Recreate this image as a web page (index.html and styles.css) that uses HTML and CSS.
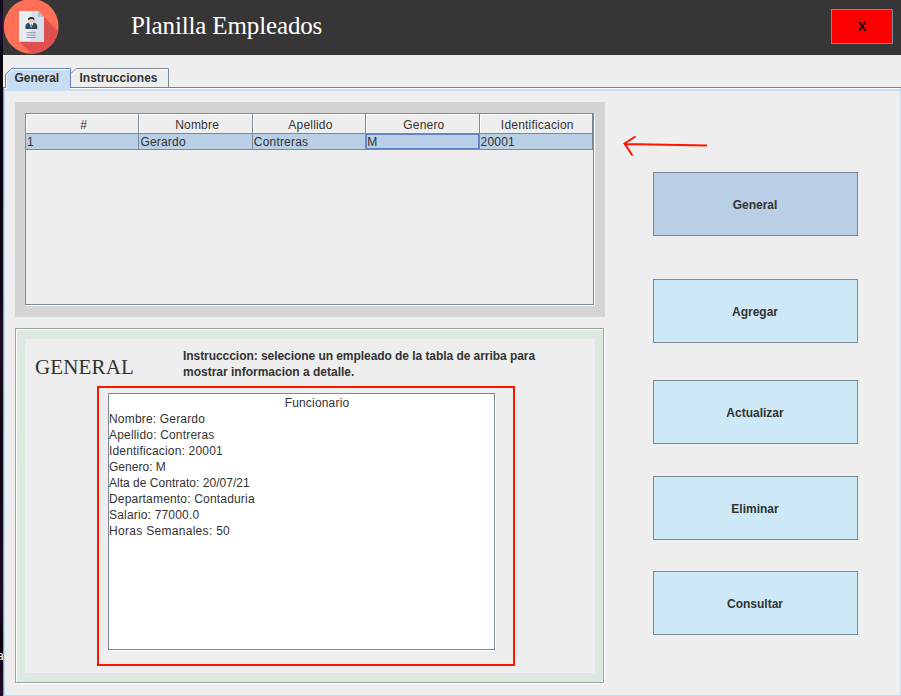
FILE: index.html
```
<!DOCTYPE html>
<html lang="es">
<head>
<meta charset="utf-8">
<title>Planilla Empleados</title>
<link rel="stylesheet" href="styles.css">
</head>
<body>
<div class="desktop"><span class="desktop-label">a</span></div>
<div class="window">
  <header class="titlebar">
    <svg class="logo" width="56" height="55" viewBox="0 0 56 55">
      <defs><clipPath id="disc"><circle cx="28.2" cy="26.4" r="27.4"/></clipPath></defs>
      <circle cx="28.2" cy="26.4" r="27.4" fill="#ff7058"/>
      <path clip-path="url(#disc)" d="M40.500 16.500 60 36V60H35L16 41.500Z" fill="#e0504f"/>
      <path d="M16 11h19l5.700 5.700v25H16z" fill="#e6edf5"/>
      <path d="M28.300 11H35l5.700 5.700v25H28.300z" fill="#d5dfe9"/>
      <path d="M35 11v5.700h5.700z" fill="#aebfd2"/>
      <path d="M22.500 29v-3q0-3 4-3.500h3.700q4 .5 4 3.500v3z" fill="#324a5e"/>
      <path d="m26 22.500 2.300 5.800 2.300-5.800z" fill="#fff"/>
      <path d="m28.300 23.500-.8 1.500.8 4 .8-4z" fill="#2b8dbd"/>
      <ellipse cx="28.300" cy="20.300" rx="2.700" ry="3.200" fill="#f6c9a8"/>
      <path d="M25.300 20.500q-.8-3.500 3-3.500t3 3.500q-1-1.800-3-1.800t-3 1.800z" fill="#1d2430"/>
      <path d="M23.700 32.700h9M23.700 35.100h9M23.700 37.500h9" stroke="#8d99a6" stroke-width="1"/>
    </svg>
    <h1 class="title">Planilla Empleados</h1>
    <button class="close">X</button>
  </header>

  <nav class="tabs">
    <div class="tab tab-active"><svg class="tab-shape" width="66" height="21"><path d="M.5 20V6.500L6.500 .5H65.500V20" fill="#c8ddf2" stroke="#6382bf"/><path d="M1.500 20V7L7 1.500H65" fill="none" stroke="#fff"/><path d="M2 19H65V21H2z" fill="#c8ddf2"/></svg><span class="tab-text">General</span></div>
    <div class="tab tab-other"><svg class="tab-shape" width="99" height="19"><path d="M.5 6 6 .5H98.500V19" fill="#eee" stroke="#7a8a99"/><path d="M1 7 7 1.500H97" fill="none" stroke="#fff"/></svg><span class="tab-text">Instrucciones</span></div>
  </nav>

  <main class="content">
    <section class="left">
      <div class="table-panel">
        <div class="scroll">
          <table class="grid">
            <thead><tr><th>#</th><th>Nombre</th><th>Apellido</th><th>Genero</th><th>Identificacion</th></tr></thead>
            <tbody><tr><td>1</td><td>Gerardo</td><td>Contreras</td><td class="focus">M</td><td>20001</td></tr></tbody>
          </table>
        </div>
      </div>
      <div class="detail-panel">
        <div class="detail">
          <div class="detail-head">
            <h2 class="heading">GENERAL</h2>
            <p class="hint"><span class="hint-first">Instrucccion: selecione un empleado de la tabla de arriba para</span><br><span class="hint-second">mostrar informacion a detalle.</span></p>
          </div>
          <div class="highlight">
            <div class="textarea">
              <div class="center">Funcionario</div>
              <div>Nombre: Gerardo</div>
              <div>Apellido: Contreras</div>
              <div>Identificacion: 20001</div>
              <div class="tight">Genero: M</div>
              <div class="tight">Alta de Contrato: 20/07/21</div>
              <div>Departamento: Contaduria</div>
              <div>Salario: 77000.0</div>
              <div class="wide">Horas Semanales: 50</div>
            </div>
          </div>
        </div>
      </div>
    </section>
    <aside class="actions">
      <svg class="arrow" width="90" height="28" viewBox="620 132 90 28"><path d="M707 145.600 624.500 144M635.500 136.500 624.500 143.500 632.500 155.500" fill="none" stroke="#ff1400" stroke-width="2"/></svg>
      <button class="action selected">General</button>
      <button class="action">Agregar</button>
      <button class="action">Actualizar</button>
      <button class="action">Eliminar</button>
      <button class="action">Consultar</button>
    </aside>
  </main>
</div>
</body>
</html>
```
FILE: styles.css
```
* { box-sizing: border-box; }
body {
  margin: 0;
  width: 901px;
  height: 696px;
  overflow: hidden;
  display: flex;
  background: #eee;
  color: #333;
  font: 12px/16px "Liberation Sans", Arial, sans-serif;
}
h1, h2, p { margin: 0; font-weight: normal; }
button { font: bold 12px/16px "Liberation Sans", Arial, sans-serif; color: #333; padding: 0; border-radius: 0; }

.desktop {
  width: 3px;
  flex: none;
  overflow: hidden;
  padding-top: 648px;
  background: linear-gradient(#150a20, #241036 30px, #0c0615 55px, #07040d 130px, #0c0718 300px, #1c0e24 330px, #0a0611 450px, #1b0b26 600px, #080410 640px, #210e2c);
}
.desktop-label { color: #fff; margin-left: -3px; }
.window { flex: 1; display: flex; flex-direction: column; }

.titlebar {
  height: 55px;
  flex: none;
  background: #363636;
  display: flex;
  align-items: flex-start;
}
.logo { flex: none; }
.title {
  margin: 11px 0 0 72px;
  flex: 1;
  font: 25px/30px "Liberation Serif", "Times New Roman", serif;
  letter-spacing: -0.14px;
  color: #fff;
}
.close {
  width: 62px;
  height: 35px;
  margin: 9px 8px 0 0;
  background: #f00;
  border: 1px solid #7a8a99;
  color: #000;
}

.tabs {
  height: 33px;
  flex: none;
  padding: 13px 0 0 2px;
  display: flex;
  background: linear-gradient(#6382bf, #6382bf) 0 32px / 100% 1px no-repeat;
}
.tab { position: relative; height: 20px; font-weight: bold; }
.tab-active { z-index: 1; width: 66px; padding: 2px 0 0 10px; }
.tab-other { width: 99px; height: 19px; padding: 2px 0 0 10px; margin-left: -1px; }
.tab-shape { position: absolute; left: 0; top: 0; }
.tab-text { position: relative; left: -0.5px; }

.content {
  height: 608px;
  display: flex;
  border-left: 1px solid #7f9bd0;
  border-right: 1px solid #c8ddf2;
  border-bottom: 1px solid #c8ddf2;
  box-shadow: inset 1px 0 #c8ddf2, inset 0 1px #fff, inset 0 3px #c8ddf2;
  padding: 14px 0 0 11px;
}
.left { width: 590px; flex: none; }
.table-panel { height: 215px; padding: 11px 10px; background: #d4d4d4; }
.scroll { width: 569px; height: 192px; border: 1px solid #7a8a99; background: #eee; box-shadow: 1px 1px #fff; }
.grid { width: 567px; table-layout: fixed; border-collapse: separate; border-spacing: 0; letter-spacing: 0.2px; }
.grid th {
  height: 20px;
  padding: 2px 0 0 3px;
  font-weight: normal;
  line-height: 16px;
  border-right: 1px solid #7a8a99;
  border-bottom: 1px solid #7a8a99;
  box-shadow: inset 1px 1px #fff;
}
.grid td {
  height: 16px;
  padding: 1px 0 0 1px;
  line-height: 14px;
  background: #b8cfe5;
  border-right: 1px solid #7a8a99;
  border-bottom: 1px solid #7a8a99;
}
.grid .focus { box-shadow: inset 0 0 0 1px #6382bf; }

.detail-panel {
  width: 589px;
  height: 355px;
  margin-top: 11px;
  padding: 10px 8px 9px 9px;
  background: #dde8df;
  border: 1px solid #9aa69d;
  box-shadow: inset 1px 1px #fff, 1px 1px #fff;
}
.detail { height: 334px; width: 570px; background: #eee; }
.detail-head { display: flex; height: 47px; }
.heading {
  width: 148px;
  margin: 14px 0 0 10px;
  font: 21px/28px "Liberation Serif", "Times New Roman", serif;
  letter-spacing: 0.15px;
}
.hint { margin-top: 9px; font-weight: bold; white-space: nowrap; }
.hint-first { letter-spacing: -0.055px; }
.highlight {
  width: 418px;
  height: 280px;
  margin-left: 72px;
  padding: 5px 9px;
  border: 2px solid #ff1400;
}
.textarea {
  width: 387px;
  height: 257px;
  padding-top: 1px;
  background: #fff;
  border: 1px solid #7a8a99;
  box-shadow: 1px 1px #fff;
  letter-spacing: 0.18px;
}
.center { text-align: center; padding-left: 31px; }
.tight { letter-spacing: 0.02px; }
.wide { letter-spacing: 0.3px; }

.actions { flex: 1; padding-left: 15px; }
.arrow { display: block; margin: 30px 0 12px; }
.action {
  display: block;
  width: 205px;
  height: 64px;
  margin: 0 0 37px 33px;
  padding: 2px 1px 0 0;
  background: #cde8f6;
  border: 1px solid #7a8a99;
}
.selected { background: #b8cfe5; margin-bottom: 43px; }
.action:nth-of-type(3) { margin-bottom: 32px; }
.action:nth-of-type(4) { margin-bottom: 31px; }
```
